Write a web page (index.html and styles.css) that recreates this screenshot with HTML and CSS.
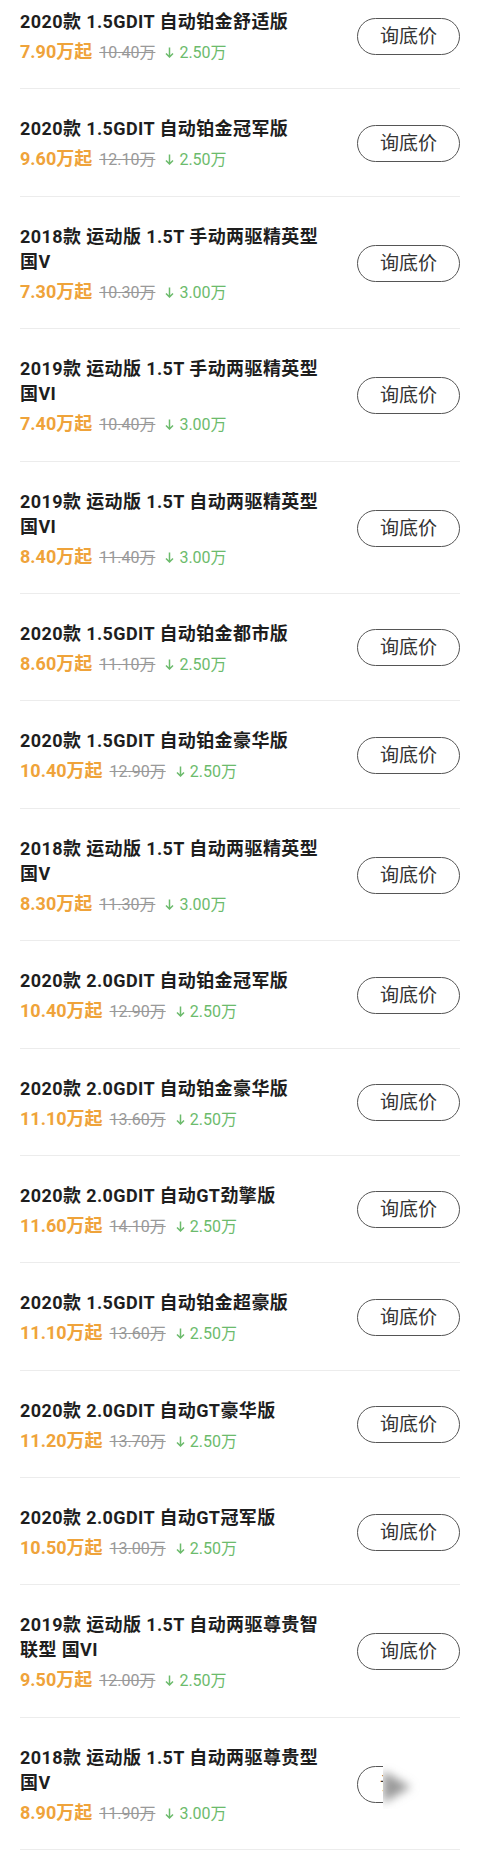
FILE: index.html
```html
<!DOCTYPE html>
<html lang="zh-CN">
  <head>
    <meta charset="UTF-8" />
    <meta name="viewport" content="width=device-width, initial-scale=1.0" />
    <title>车型报价</title>
    <link rel="stylesheet" href="styles.css">
  </head>
  <body>
    <ul class="list">
      <li class="item">
        <div class="info">
          <div class="title">2020款 1.5GDIT 自动铂金舒适版</div>
          <div class="price"><span class="now">7.90万起</span><span class="old">10.40万</span><span class="cut"><svg class="down" viewBox="0 0 9 11"><path d="M4.5 0.5V10M1 6.5L4.5 10L8 6.5" /></svg>2.50万</span></div>
        </div>
        <a class="btn">询底价</a>
      </li>
      <li class="item">
        <div class="info">
          <div class="title">2020款 1.5GDIT 自动铂金冠军版</div>
          <div class="price"><span class="now">9.60万起</span><span class="old">12.10万</span><span class="cut"><svg class="down" viewBox="0 0 9 11"><path d="M4.5 0.5V10M1 6.5L4.5 10L8 6.5" /></svg>2.50万</span></div>
        </div>
        <a class="btn">询底价</a>
      </li>
      <li class="item">
        <div class="info">
          <div class="title">2018款 运动版 1.5T 手动两驱精英型 国V</div>
          <div class="price"><span class="now">7.30万起</span><span class="old">10.30万</span><span class="cut"><svg class="down" viewBox="0 0 9 11"><path d="M4.5 0.5V10M1 6.5L4.5 10L8 6.5" /></svg>3.00万</span></div>
        </div>
        <a class="btn">询底价</a>
      </li>
      <li class="item">
        <div class="info">
          <div class="title">2019款 运动版 1.5T 手动两驱精英型 国VI</div>
          <div class="price"><span class="now">7.40万起</span><span class="old">10.40万</span><span class="cut"><svg class="down" viewBox="0 0 9 11"><path d="M4.5 0.5V10M1 6.5L4.5 10L8 6.5" /></svg>3.00万</span></div>
        </div>
        <a class="btn">询底价</a>
      </li>
      <li class="item">
        <div class="info">
          <div class="title">2019款 运动版 1.5T 自动两驱精英型 国VI</div>
          <div class="price"><span class="now">8.40万起</span><span class="old">11.40万</span><span class="cut"><svg class="down" viewBox="0 0 9 11"><path d="M4.5 0.5V10M1 6.5L4.5 10L8 6.5" /></svg>3.00万</span></div>
        </div>
        <a class="btn">询底价</a>
      </li>
      <li class="item">
        <div class="info">
          <div class="title">2020款 1.5GDIT 自动铂金都市版</div>
          <div class="price"><span class="now">8.60万起</span><span class="old">11.10万</span><span class="cut"><svg class="down" viewBox="0 0 9 11"><path d="M4.5 0.5V10M1 6.5L4.5 10L8 6.5" /></svg>2.50万</span></div>
        </div>
        <a class="btn">询底价</a>
      </li>
      <li class="item">
        <div class="info">
          <div class="title">2020款 1.5GDIT 自动铂金豪华版</div>
          <div class="price"><span class="now">10.40万起</span><span class="old">12.90万</span><span class="cut"><svg class="down" viewBox="0 0 9 11"><path d="M4.5 0.5V10M1 6.5L4.5 10L8 6.5" /></svg>2.50万</span></div>
        </div>
        <a class="btn">询底价</a>
      </li>
      <li class="item">
        <div class="info">
          <div class="title">2018款 运动版 1.5T 自动两驱精英型 国V</div>
          <div class="price"><span class="now">8.30万起</span><span class="old">11.30万</span><span class="cut"><svg class="down" viewBox="0 0 9 11"><path d="M4.5 0.5V10M1 6.5L4.5 10L8 6.5" /></svg>3.00万</span></div>
        </div>
        <a class="btn">询底价</a>
      </li>
      <li class="item">
        <div class="info">
          <div class="title">2020款 2.0GDIT 自动铂金冠军版</div>
          <div class="price"><span class="now">10.40万起</span><span class="old">12.90万</span><span class="cut"><svg class="down" viewBox="0 0 9 11"><path d="M4.5 0.5V10M1 6.5L4.5 10L8 6.5" /></svg>2.50万</span></div>
        </div>
        <a class="btn">询底价</a>
      </li>
      <li class="item">
        <div class="info">
          <div class="title">2020款 2.0GDIT 自动铂金豪华版</div>
          <div class="price"><span class="now">11.10万起</span><span class="old">13.60万</span><span class="cut"><svg class="down" viewBox="0 0 9 11"><path d="M4.5 0.5V10M1 6.5L4.5 10L8 6.5" /></svg>2.50万</span></div>
        </div>
        <a class="btn">询底价</a>
      </li>
      <li class="item">
        <div class="info">
          <div class="title">2020款 2.0GDIT 自动GT劲擎版</div>
          <div class="price"><span class="now">11.60万起</span><span class="old">14.10万</span><span class="cut"><svg class="down" viewBox="0 0 9 11"><path d="M4.5 0.5V10M1 6.5L4.5 10L8 6.5" /></svg>2.50万</span></div>
        </div>
        <a class="btn">询底价</a>
      </li>
      <li class="item">
        <div class="info">
          <div class="title">2020款 1.5GDIT 自动铂金超豪版</div>
          <div class="price"><span class="now">11.10万起</span><span class="old">13.60万</span><span class="cut"><svg class="down" viewBox="0 0 9 11"><path d="M4.5 0.5V10M1 6.5L4.5 10L8 6.5" /></svg>2.50万</span></div>
        </div>
        <a class="btn">询底价</a>
      </li>
      <li class="item">
        <div class="info">
          <div class="title">2020款 2.0GDIT 自动GT豪华版</div>
          <div class="price"><span class="now">11.20万起</span><span class="old">13.70万</span><span class="cut"><svg class="down" viewBox="0 0 9 11"><path d="M4.5 0.5V10M1 6.5L4.5 10L8 6.5" /></svg>2.50万</span></div>
        </div>
        <a class="btn">询底价</a>
      </li>
      <li class="item">
        <div class="info">
          <div class="title">2020款 2.0GDIT 自动GT冠军版</div>
          <div class="price"><span class="now">10.50万起</span><span class="old">13.00万</span><span class="cut"><svg class="down" viewBox="0 0 9 11"><path d="M4.5 0.5V10M1 6.5L4.5 10L8 6.5" /></svg>2.50万</span></div>
        </div>
        <a class="btn">询底价</a>
      </li>
      <li class="item">
        <div class="info">
          <div class="title">2019款 运动版 1.5T 自动两驱尊贵智联型 国VI</div>
          <div class="price"><span class="now">9.50万起</span><span class="old">12.00万</span><span class="cut"><svg class="down" viewBox="0 0 9 11"><path d="M4.5 0.5V10M1 6.5L4.5 10L8 6.5" /></svg>2.50万</span></div>
        </div>
        <a class="btn">询底价</a>
      </li>
      <li class="item">
        <div class="info">
          <div class="title">2018款 运动版 1.5T 自动两驱尊贵型 国V</div>
          <div class="price"><span class="now">8.90万起</span><span class="old">11.90万</span><span class="cut"><svg class="down" viewBox="0 0 9 11"><path d="M4.5 0.5V10M1 6.5L4.5 10L8 6.5" /></svg>3.00万</span></div>
        </div>
        <a class="btn">询底价</a>
        <!-- 截图上的浮层遮挡 -->
        <div class="mask">
          <svg width="100" height="46" viewBox="0 0 100 46">
            <defs>
              <filter id="blur" x="-50%" y="-50%" width="200%" height="200%">
                <feGaussianBlur stdDeviation="5" />
              </filter>
            </defs>
            <polygon points="0,8 28,24 0,40" fill="#9a9a9a" filter="url(#blur)" />
          </svg>
        </div>
      </li>
    </ul>
  </body>
</html>
```

FILE: styles.css
```css
body {
  margin: 0;
  background: #fff;
  font-family: Roboto, "Noto Sans CJK SC", sans-serif;
  color: #1e1e1e;
}
.list {
  list-style: none;
  margin: 0;
  padding: 0 0 16px;
}
.item {
  position: relative;
  display: flex;
  align-items: center;
  margin: 0 20px;
  padding: 27px 0 23.4px;
  border-bottom: 1px solid #ececec;
}
.item:first-child {
  padding-top: 9px;
}
.info {
  flex: 1;
  padding-right: 30px;
}
.title {
  font-size: 18px;
  line-height: 25px;
  font-weight: bold;
  letter-spacing: 0.4px;
}
.price {
  display: flex;
  align-items: baseline;
  height: 26px;
  margin-top: 5px;
  line-height: 26px;
  white-space: nowrap;
}
.now {
  font-size: 18px;
  font-weight: bold;
  color: #efa33a;
}
.old {
  margin-left: 7px;
  font-size: 16px;
  color: #999;
  text-decoration: line-through;
}
.cut {
  margin-left: 10px;
  font-size: 16px;
  color: #6cbb6c;
}
.down {
  width: 9px;
  height: 11px;
  margin-right: 5px;
  fill: none;
  stroke: #6cbb6c;
  stroke-width: 1.5;
}
.btn {
  flex-shrink: 0;
  box-sizing: border-box;
  width: 103px;
  height: 37px;
  margin-top: -2px;
  border: 1px solid #555;
  border-radius: 19px;
  font-size: 19px;
  line-height: 35px;
  text-align: center;
  color: #333;
}
.mask {
  position: absolute;
  left: 363px;
  top: 45px;
  width: 100px;
  height: 46px;
  background: #fff;
}
```
